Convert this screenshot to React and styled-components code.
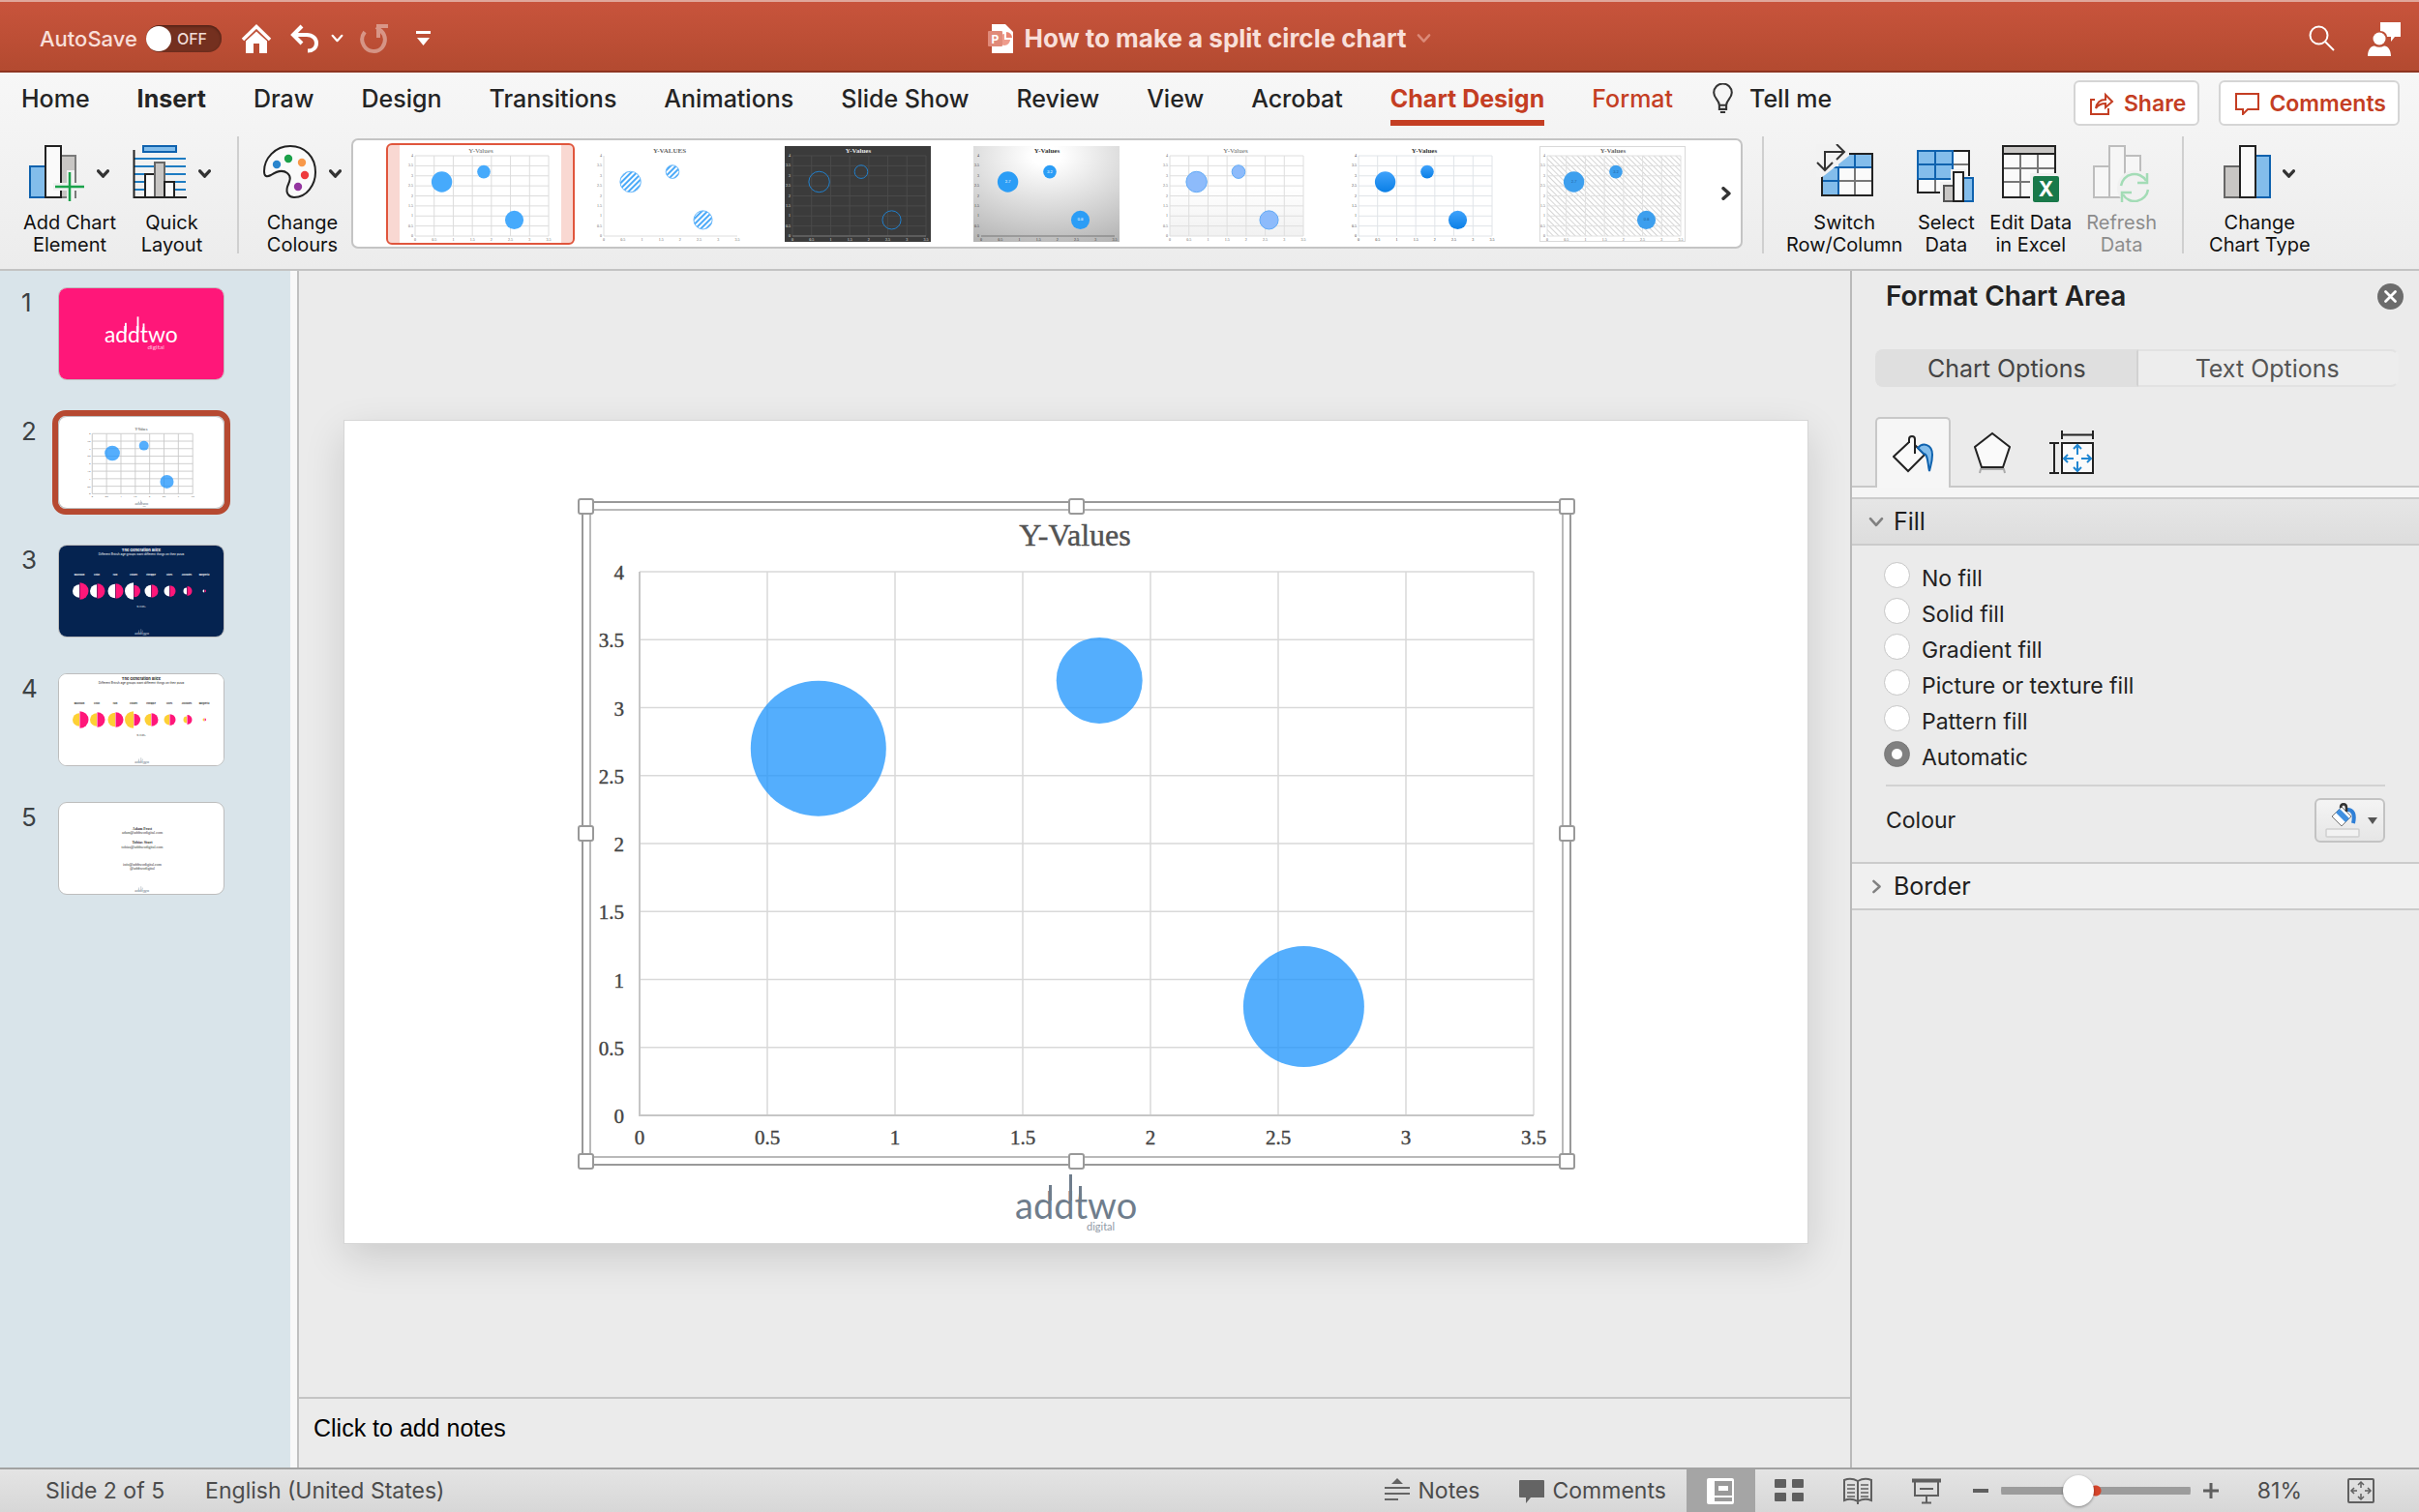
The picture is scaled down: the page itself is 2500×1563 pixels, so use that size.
import React, {useState} from 'react';
import styled, {createGlobalStyle, css} from 'styled-components';

const SANS = `Inter, "Liberation Sans", sans-serif`;
const SERIF = `"Liberation Serif", "Times New Roman", serif`;

const GlobalStyle = createGlobalStyle`
  *, *::before, *::after { box-sizing: border-box; }
  body { margin: 0; background: #ebebeb; font-family: ${SANS}; color: #222; }
  button, input, textarea { font: inherit; color: inherit; }
  button { padding: 0; border: 0; background: none; cursor: pointer; }
  svg { display: block; flex: none; }
`;

const AppWindow = styled.div`
  display: flex;
  flex-direction: column;
  height: 100vh;
`;

/* ---------- title bar ---------- */

const TitleBar = styled.header`
  display: grid;
  grid-template-columns: 1fr auto 1fr;
  align-items: center;
  height: 75px;
  padding: 4px 19px 0;
  border-top: 2px solid #e0a79b;
  border-bottom: 2px solid #8e3522;
  background: linear-gradient(#c8543c, #b34a30);
  color: #f8dfd9;
`;

const QuickAccess = styled.div`
  display: flex;
  align-items: center;
  margin-left: 22px;
`;

const AutoSave = styled.label`
  display: flex;
  align-items: center;
  gap: 9px;
  margin-right: 20px;
  font-size: 22px;
  font-weight: 500;
`;

const Toggle = styled.span`
  display: flex;
  align-items: center;
  gap: 6px;
  width: 78px;
  height: 28px;
  border-radius: 14px;
  background: #74301f;
  box-shadow: inset 0 1px 3px rgba(0, 0, 0, 0.4);
  color: #f0dcd7;
  font-size: 16px;
`;

const ToggleKnob = styled.input`
  appearance: none;
  width: 26px;
  height: 26px;
  margin: 0;
  border-radius: 50%;
  background: #fff;
`;

const IconButton = styled.button`
  display: flex;
  align-items: center;
  margin-right: ${props => props.$gap || 0}px;
  color: #fff;
  opacity: ${props => (props.disabled ? 0.4 : 1)};
`;

const DocumentTitle = styled.button`
  display: flex;
  align-items: center;
  gap: 10px;
  font-size: 26px;
  font-weight: 700;
`;

const TitleActions = styled.div`
  display: flex;
  align-items: center;
  justify-content: flex-end;
  gap: 34px;
`;

/* ---------- ribbon ---------- */

const Ribbon = styled.div`
  display: flex;
  flex-direction: column;
  height: 205px;
  border-bottom: 2px solid #c3c3c3;
  background: linear-gradient(#f7f7f7, #ececec);
`;

const TabRow = styled.div`
  display: flex;
  align-items: flex-start;
  gap: 40px;
  height: 66px;
  padding: 8px 20px 0 22px;
`;

const Tabs = styled.nav`
  display: flex;
  gap: 49px;
`;

const Tab = styled.button`
  display: flex;
  align-items: center;
  gap: 16px;
  height: 47px;
  padding: 0 0 4px;
  border-bottom: 6px solid transparent;
  font-size: 25px;
  font-weight: ${props => (props.$bold ? 700 : 500)};
  line-height: 34px;
  color: ${props => (props.$accent ? '#c43e23' : '#242424')};
  white-space: nowrap;
  ${props =>
    props.$active &&
    css`
      border-image: linear-gradient(#c43e23, #c43e23) 0 0 6 0;
    `}
`;

const TabActions = styled.div`
  display: flex;
  gap: 20px;
  margin-left: auto;
`;

const ActionButton = styled.button`
  display: flex;
  align-items: center;
  gap: 10px;
  height: 47px;
  padding: 0 12px 0 15px;
  border: 2px solid #d5d5d5;
  border-radius: 6px;
  background: #fff;
  color: #c43e23;
  font-size: 23px;
  font-weight: 600;
`;

const Tools = styled.div`
  display: flex;
  align-items: flex-start;
  padding: 0 16px;
`;

const ToolGroup = styled.div`
  display: flex;
  gap: ${props => props.$gap || 14}px;
  padding: 8px ${props => props.$right || 8}px 0 ${props => props.$left || 8}px;
`;

const Divider = styled.div`
  width: 2px;
  height: 121px;
  background: #cfcfcf;
`;

const Tool = styled.button`
  display: flex;
  flex-direction: column;
  align-items: center;
  gap: 10px;
  font-size: 20px;
  line-height: 23px;
  color: ${props => (props.disabled ? '#8c8c8c' : '#111')};
  white-space: pre-line;
`;

const ToolIcon = styled.span`
  display: flex;
  align-items: center;
  gap: ${props => props.$gap || 12}px;
  height: 60px;
`;

const Gallery = styled.div`
  display: flex;
  align-items: center;
  flex: 1;
  max-width: 1438px;
  height: 114px;
  margin: 2px 20px 0 2px;
  padding-left: 34px;
  border: 2px solid #c4c4c4;
  border-radius: 7px;
  background: #fff;
`;

const GalleryItem = styled.button`
  display: flex;
  justify-content: center;
  width: 195px;
  height: 105px;
  align-items: center;
  border: 2px solid transparent;
  border-radius: 6px;
  ${props =>
    props.$selected &&
    css`
      border-color: #e0563d;
      background: linear-gradient(90deg, #f9d8d2 12px, #fff 12px, #fff 179px, #f9d8d2 179px);
    `}
`;

const GalleryMore = styled.button`
  flex: 1;
  display: flex;
  justify-content: flex-end;
  padding-right: 10px;
`;

/* ---------- body ---------- */

const Body = styled.div`
  display: flex;
  flex: 1;
  min-height: 0;
`;

const SlideList = styled.ol`
  display: flex;
  flex-direction: column;
  gap: 25px;
  flex: none;
  width: 309px;
  margin: 0;
  padding: 11px 0 0 22px;
  list-style: none;
  border-right: 2px solid #c0c0c0;
  background: linear-gradient(90deg, #d9e4ea 300px, #f8f8f8 300px);
`;

const SlideItem = styled.li`
  display: flex;
  align-items: flex-start;
  gap: 16px;
  font-size: 26px;
  line-height: 44px;
  color: #3c4144;
`;

const SlideNumber = styled.span`
  width: 16px;
`;

const SlideThumb = styled.button`
  width: 184px;
  height: 108px;
  padding: ${props => (props.$selected ? 0 : 6)}px;
  border: ${props => (props.$selected ? '6px solid #b64931' : '0')};
  border-radius: 14px;

  svg {
    width: 100%;
    height: 100%;
    border: 1px solid #bdbdbd;
    border-radius: 9px;
    background: #fff;
  }
`;

const Editor = styled.main`
  display: flex;
  flex-direction: column;
  flex: 1;
  min-width: 0;
`;

const Stage = styled.div`
  display: flex;
  align-items: center;
  flex: 1;
  min-height: 0;
  padding: 0 44px 4px 47px;
`;

const Slide = styled.div`
  width: 100%;
  background: #fff;
  outline: 1px solid #d6d6d6;
  box-shadow: 0 14px 40px rgba(0, 0, 0, 0.14);
`;

const Notes = styled.textarea`
  height: 73px;
  padding: 14px 15px;
  border: 0;
  border-top: 2px solid #c4c4c4;
  background: #ebebeb;
  font-family: "Liberation Sans", Arial, sans-serif;
  font-size: 25px;
  line-height: 32px;
  resize: none;
  outline: 0;

  &::placeholder {
    color: #000;
    opacity: 1;
  }
`;

/* ---------- format pane ---------- */

const Pane = styled.aside`
  flex: none;
  width: 588px;
  border-left: 2px solid #b9b9b9;
`;

const PaneHeader = styled.div`
  display: flex;
  align-items: center;
  justify-content: space-between;
  padding: 8px 16px 0 35px;
`;

const PaneTitle = styled.h2`
  margin: 0;
  font-size: 28px;
  font-weight: 600;
  line-height: 36px;
`;

const Segments = styled.div`
  display: flex;
  height: 39px;
  margin: 37px 21px 31px 24px;
`;

const Segment = styled.button`
  flex: 1;
  border: 2px solid ${props => (props.$active ? '#dfdfdf' : '#e2e2e2')};
  border-right-color: ${props => (props.$active ? '#d2d2d2' : 'transparent')};
  border-left-width: ${props => (props.$active ? 2 : 0)}px;
  border-radius: ${props => (props.$active ? '8px 0 0 8px' : '0 8px 8px 0')};
  background: ${props => (props.$active ? '#dfdfdf' : '#ededed')};
  color: ${props => (props.$active ? '#444' : '#555')};
  font-size: 25px;
  line-height: 30px;
`;

const PaneTabs = styled.div`
  display: flex;
  height: 83px;
  padding-left: 24px;
  background: linear-gradient(#ebebeb 71px, #c8c8c8 71px, #c8c8c8 73px, #f5f5f5 73px);
`;

const PaneTab = styled.button`
  display: flex;
  align-items: center;
  justify-content: center;
  width: ${props => props.$width}px;
  height: 73px;
  ${props =>
    props.$active &&
    css`
      border: 2px solid #c8c8c8;
      border-bottom: 0;
      border-radius: 5px 5px 0 0;
      background: #f6f6f6;
    `}
`;

const SectionHeader = styled.button`
  display: flex;
  align-items: center;
  gap: 10px;
  width: 100%;
  height: 50px;
  padding-left: 17px;
  border-top: 2px solid #cbcbcb;
  border-bottom: 2px solid #cbcbcb;
  background: ${props => (props.$open ? 'linear-gradient(#e6e6e6, #dddddd)' : '#f0f0f0')};
  font-size: 25px;
  color: #1d1d1d;
`;

const ChevronSlot = styled.span`
  display: flex;
  justify-content: center;
  width: 16px;
`;

const FillBody = styled.div`
  padding: 15px 35px 20px;
`;

const RadioRow = styled.label`
  display: flex;
  align-items: center;
  gap: 12px;
  height: 37px;
  font-size: 23px;
  color: #222;
`;

const Radio = styled.input`
  appearance: none;
  width: 27px;
  height: 27px;
  margin: 0 0 6px -2px;
  border: 1px solid #c6c6c6;
  border-radius: 50%;
  background: #fff;

  &:checked {
    border-color: #777;
    background: radial-gradient(circle, #fff 5px, #808080 6px);
  }
`;

const ColourRow = styled.div`
  display: flex;
  align-items: center;
  justify-content: space-between;
  margin-top: 10px;
  padding-top: 12px;
  border-top: 2px solid #d2d2d2;
  font-size: 23px;
  line-height: 30px;
`;

const ColourButton = styled.button`
  display: flex;
  align-items: center;
  gap: 8px;
  height: 46px;
  padding: 0 6px 0 9px;
  border: 2px solid #c3c3c3;
  border-radius: 6px;
  background: linear-gradient(#f4f4f4, #e6e6e6);
`;

/* ---------- status bar ---------- */

const StatusBar = styled.footer`
  display: flex;
  align-items: center;
  justify-content: space-between;
  flex: none;
  height: 46px;
  padding: 0 46px 0 47px;
  border-top: 2px solid #a2a2a2;
  background: linear-gradient(#e4e4e4, #d7d7d7);
  color: #4c4c4c;
  font-size: 23px;
`;

const StatusGroup = styled.div`
  display: flex;
  align-items: center;
  gap: ${props => props.$gap}px;
  height: 100%;
`;

const StatusButton = styled.button`
  display: flex;
  align-items: center;
  gap: 9px;
`;

const ViewButtons = styled.div`
  display: flex;
  height: 100%;
  margin-left: 21px;
`;

const ViewButton = styled.button`
  display: flex;
  align-items: center;
  justify-content: center;
  width: 71px;
  height: 100%;
  background: ${props => (props.$active ? '#a5a5a5' : 'none')};
`;

const ZoomControls = styled.div`
  display: flex;
  align-items: center;
  gap: 12px;
  margin: 0 39px 0 11px;
`;

const ZoomSlider = styled.input`
  appearance: none;
  width: 196px;
  height: 34px;
  margin: 0;
  background:
    radial-gradient(circle at 98px 17px, #d5452b 5px, transparent 6px),
    linear-gradient(transparent 13px, #9c9c9c 13px, #9c9c9c 21px, transparent 21px);
  border-radius: 17px;

  &::-webkit-slider-thumb {
    appearance: none;
    width: 32px;
    height: 32px;
    border-radius: 50%;
    background: #fff;
    box-shadow: 0 1px 3px rgba(0, 0, 0, 0.4);
  }
`;

/* ---------- icons ---------- */

const Chevron = ({dir = 'down', size = 12, color = '#333', weight = 3}) => (
  <svg
    width={dir === 'down' ? size : Math.round(size * 0.7)}
    height={dir === 'down' ? Math.round(size * 0.7) : size}
    viewBox={dir === 'down' ? '0 0 12 8' : '0 0 8 12'}
    fill="none"
    stroke={color}
    strokeWidth={weight}
    strokeLinecap="round"
    strokeLinejoin="round"
  >
    <path d={dir === 'down' ? 'M1.5 1.5 6 6.5 10.5 1.5' : 'M1.5 1.5 6.5 6 1.5 10.5'} />
  </svg>
);

const HomeIcon = () => (
  <svg width="32" height="30" viewBox="0 0 32 30">
    <path d="M2 16 16 2.500 30 16" fill="none" stroke="#fff" strokeWidth="3.500" />
    <path d="M5 17.500 16 7.500 27 17.500V30H19V20H13V30H5Z" fill="#fff" />
  </svg>
);

const UndoIcon = () => (
  <svg width="30" height="30" viewBox="0 0 30 30" fill="none" stroke="#fff" strokeWidth="4">
    <path d="M12 2 3 11 12 20" />
    <path d="M3 11H17C23 11 27 15 27 19.500C27 24 23.500 27.500 18 27.500" />
  </svg>
);

const RedoIcon = () => (
  <svg width="30" height="32" viewBox="0 0 30 32" fill="none" stroke="#fff" strokeWidth="4">
    <path d="M5 9C2 13 1 18 4 23C8 30 18 31 23 25C27 20 27 13 22 8L17 4" />
    <path d="M29 3H19V15" />
  </svg>
);

const CustomizeIcon = () => (
  <svg width="15" height="16" viewBox="0 0 15 16" fill="#fff">
    <path d="M0 0H15V3H0ZM1 7H14L7.500 15Z" />
  </svg>
);

const FileIcon = () => (
  <svg width="27" height="30" viewBox="0 0 27 30">
    <path d="M4 0H18L26 8V30H4Z" fill="#fff" />
    <path d="M17 10A6 6 0 1 0 23 16H17Z" fill="#ee9c8c" />
    <path d="M19 8A6 6 0 0 1 25 14H19Z" fill="#e98572" />
    <rect y="7" width="15" height="16" rx="1" fill="#e08a79" />
    <text x="7.500" y="19.500" textAnchor="middle" fontSize="12" fontWeight="700" fill="#fff">P</text>
  </svg>
);

const SearchIcon = () => (
  <svg width="27" height="27" viewBox="0 0 27 27" fill="none" stroke="#fff" strokeWidth="2">
    <circle cx="10.500" cy="10.500" r="9" />
    <path d="M17 17 26 26" />
  </svg>
);

const PersonIcon = () => (
  <svg width="34" height="36" viewBox="0 0 34 36" fill="#fff">
    <path d="M13 1H34V16H28L24 21V16H20C20 13 17 10 13 10Z" />
    <circle cx="12" cy="18" r="6.500" />
    <path d="M0 36C0 29 4 25 7 25.500Q12 28 17 25.500C20 25 24 29 24 36Z" />
  </svg>
);

const BulbIcon = () => (
  <svg width="23" height="31" viewBox="0 0 21 30" fill="none" stroke="#333" strokeWidth="2">
    <path d="M7 22C7 17 1.500 15 1.500 9.500A9 9 0 0 1 19.500 9.500C19.500 15 14 17 14 22ZM7 22V26H14V22M8 29H13" />
  </svg>
);

const ShareIcon = () => (
  <svg width="25" height="24" viewBox="0 0 25 24" fill="none" stroke="#c43e23" strokeWidth="2">
    <path d="M5 8H1V23H19V17" />
    <path d="M6 17C7 11 10 8 16 8V3L23 10 16 16V12C11 12 8 14 6 17Z" />
  </svg>
);

const CommentIcon = () => (
  <svg width="25" height="24" viewBox="0 0 25 24" fill="none" stroke="#c43e23" strokeWidth="2">
    <path d="M1 2H24V18H13L8 23V18H1Z" />
  </svg>
);

const BLUE = '#83bdeb';
const NAVY = '#0f62ae';

const AddElementIcon = () => (
  <svg width="58" height="60" viewBox="0 0 58 60" strokeWidth="2">
    <rect x="33" y="12" width="15" height="43" fill="#c8c6c4" stroke="#7a7a7a" />
    <rect x="1" y="23" width="16" height="32" fill={BLUE} stroke={NAVY} />
    <rect x="17" y="2" width="16" height="53" fill="#fafafa" stroke="#222" />
    <path d="M25 44H60M43 27V62" stroke="#f1f1f1" strokeWidth="8" />
    <path d="M27 44H57M42 29V59" stroke="#1aa24b" strokeWidth="2.500" />
  </svg>
);

const QuickLayoutIcon = () => (
  <svg width="56" height="60" viewBox="0 0 56 60" strokeWidth="2">
    <rect x="11" y="2" width="34" height="6" fill={BLUE} stroke={NAVY} />
    <path d="M2 15H55M2 23H55M2 31H55M2 39H55M2 47H55" stroke="#1e7cc2" />
    <rect x="13" y="31" width="10" height="24" fill="#fafafa" stroke="#222" />
    <rect x="23" y="19" width="10" height="36" fill="#c8c6c4" stroke="#666" />
    <rect x="33" y="39" width="10" height="16" fill="#fafafa" stroke="#222" />
    <path d="M1.500 6V55H56" fill="none" stroke="#222" />
  </svg>
);

const PaletteIcon = () => (
  <svg width="56" height="60" viewBox="0 0 56 60">
    <path
      d="M28 2C12 2 1 15 1 28C1 34 4 34 8 32C14 28 20 26 25 30C30 34 27 39 25 44C23 51 27 55 32 55C45 55 54 42 54 29C54 13 43 2 28 2Z"
      fill="#fafafa"
      stroke="#222"
      strokeWidth="2"
    />
    <circle cx="14" cy="21" r="4.200" fill="#2a85cd" />
    <circle cx="26" cy="15" r="4.200" fill="#1ba049" />
    <circle cx="40" cy="19" r="4.200" fill="#f8994a" />
    <circle cx="43" cy="32" r="4.200" fill="#ee3b3d" />
    <circle cx="36" cy="44" r="4.200" fill="#9435a0" />
  </svg>
);

const SwitchIcon = () => (
  <svg width="59" height="60" viewBox="0 0 59 60" fill="none" strokeWidth="2">
    <rect x="6" y="10" width="52" height="43" fill="#fafafa" />
    <path d="M23 10H58V24H23ZM6 24H23V53H6Z" fill={BLUE} />
    <path d="M23 38H58M40 24V53" stroke="#777" />
    <path d="M6 38H23M23 24V53M6 24H58M40 10V24" stroke={NAVY} />
    <rect x="6" y="10" width="52" height="43" stroke="#222" />
    <path d="M0 0H34L34 12 9 32 6 34H0Z" fill="#f2f2f2" />
    <path d="M9 26V8H29M21 0 29 8 21 16M1 19 9 27 17 19" stroke="#333" />
  </svg>
);

const SelectDataIcon = () => (
  <svg width="60" height="60" viewBox="0 0 60 60" fill="none" strokeWidth="2">
    <rect x="1" y="7" width="53" height="43" fill="#fafafa" />
    <path d="M1 7H37V36H1Z" fill={BLUE} />
    <path d="M37 21H54M19 36V50M37 36V50M37 36H54" stroke="#777" />
    <rect x="1" y="7" width="53" height="43" stroke="#222" />
    <path d="M1 7H37V36H1ZM19 7V36M1 21H37" stroke={NAVY} />
    <path d="M24 60V39H35V26H51V33H60V60Z" fill="#f1f1f1" />
    <rect x="28" y="43" width="10" height="16" fill="#c8c6c4" stroke="#555" />
    <rect x="48" y="35" width="10" height="24" fill={BLUE} stroke={NAVY} />
    <rect x="38" y="29" width="10" height="30" fill="#fafafa" stroke="#222" />
  </svg>
);

const ExcelIcon = () => (
  <svg width="60" height="60" viewBox="0 0 60 60" fill="none" strokeWidth="2">
    <rect x="1" y="2" width="54" height="53" fill="#fafafa" />
    <path d="M1 2H55V10H1Z" fill="#c8c6c4" />
    <path d="M1 25H55M1 39H55M19 10V55M37 10V55" stroke="#777" />
    <path d="M1 2H55V55H1ZM1 10H55" stroke="#222" />
    <rect x="29" y="30" width="31" height="30" fill="#f1f1f1" />
    <rect x="32" y="33" width="27" height="27" rx="2" fill="#19794a" />
    <text x="45.500" y="54" textAnchor="middle" fontSize="21" fontWeight="700" fill="#fff">X</text>
  </svg>
);

const RefreshIcon = () => (
  <svg width="59" height="60" viewBox="0 0 59 60" fill="none" strokeWidth="2" stroke="#bdbdbd">
    <rect x="33" y="12" width="16" height="43" fill="#f6f6f6" />
    <rect x="1" y="23" width="16" height="32" fill="#f6f6f6" />
    <rect x="17" y="2" width="16" height="53" fill="#f6f6f6" />
    <circle cx="43" cy="45" r="18" fill="#f1f1f1" stroke="none" />
    <g stroke="#a3dcb6" strokeWidth="2.500">
      <path d="M29 43A14 14 0 0 1 55 38M57 47A14 14 0 0 1 31 52" />
      <path d="M56 30V40H46M30 60V50H40" />
    </g>
  </svg>
);

const ChartTypeIcon = () => (
  <svg width="49" height="60" viewBox="0 0 49 60" strokeWidth="2">
    <rect x="1" y="23" width="16" height="32" fill="#c8c6c4" stroke="#666" />
    <rect x="33" y="12" width="15" height="43" fill={BLUE} stroke={NAVY} />
    <rect x="17" y="2" width="16" height="53" fill="#fafafa" stroke="#222" />
  </svg>
);

const CloseIcon = () => (
  <svg width="27" height="27" viewBox="0 0 27 27">
    <circle cx="13.500" cy="13.500" r="13.500" fill="#6c6c6c" />
    <path d="M8.500 8.500 18.500 18.500M18.500 8.500 8.500 18.500" stroke="#fff" strokeWidth="2.800" strokeLinecap="round" />
  </svg>
);

const BucketIcon = () => (
  <svg width="42" height="40" viewBox="0 0 42 40" fill="none" strokeWidth="2">
    <path d="M17 8 1 23 16 38 33 21 23 11" fill="#fafafa" stroke="#222" />
    <path d="M26 14C31 8 41 10 41 21C41 29 39 33 38 38C36 31 37 20 32 20Z" fill={BLUE} stroke={NAVY} />
    <path d="M17 9V5C17 1 23 1 23 5V20" fill="#fafafa" stroke="#222" />
  </svg>
);

const PentagonIcon = () => (
  <svg width="38" height="44" viewBox="0 0 38 44" fill="none" strokeWidth="2">
    <path d="M6 43 7 39H31L32 43" stroke="#aaa" />
    <path d="M19 2 37 16 30 37H8L1 16Z" fill="#fafafa" stroke="#222" />
  </svg>
);

const SizeIcon = () => (
  <svg width="46" height="46" viewBox="0 0 46 46" fill="none" strokeWidth="2" stroke="#222">
    <path d="M13 0V9M45 0V9M13 4.500H45M0 13H10M0 44H10M5 13V44" />
    <rect x="13" y="13" width="32" height="31" fill="#fafafa" />
    <g stroke="#1f86d2">
      <path d="M29 16V25M29 32V42M16 29H25M33 29H42" />
      <path d="M25 19 29 15 33 19M25 38 29 42 33 38M19 25 15 29 19 33M39 25 43 29 39 33" />
    </g>
  </svg>
);

const ColourIcon = () => (
  <svg width="36" height="38" viewBox="0 0 36 38" fill="none">
    <path d="M7 15 17 5 27 15 17 25Z" fill="#fff" stroke="#777" />
    <path d="M11 11 21 21 25 17 15 7Z" fill="#3f8fe0" />
    <path d="M23 8C29 8 31 13 29 22" stroke="#2f7fd6" strokeWidth="4" />
    <path d="M16 6C16 1 22 1 22 6V10" stroke="#333" strokeWidth="2.500" />
    <rect x="1" y="28" width="34" height="8" rx="1" fill="#f2f2f2" stroke="#cfcfcf" strokeWidth="1.500" />
  </svg>
);

const NotesIcon = () => (
  <svg width="26" height="26" viewBox="0 0 26 26" fill="#646464">
    <path d="M7 6 13 0 19 6ZM0 9H26V11H0ZM0 15H26V17H0ZM0 21H14V23H0Z" />
  </svg>
);

const StatusCommentIcon = () => (
  <svg width="26" height="25" viewBox="0 0 26 25" fill="#646464">
    <path d="M1 1H25Q26 1 26 2V19H12L7 25V19H1Q0 19 0 18V2Q0 1 1 1Z" />
  </svg>
);

const NormalViewIcon = () => (
  <svg width="28" height="27" viewBox="0 0 28 27">
    <rect width="28" height="27" rx="2" fill="#fff" />
    <path d="M8 3H26V18H8ZM8 20H26V24H8Z" fill="#9a9a9a" />
    <rect x="12" y="8" width="10" height="5" fill="#fff" />
  </svg>
);

const SorterIcon = () => (
  <svg width="30" height="24" viewBox="0 0 30 24" fill="#5f5f5f">
    <rect width="12" height="9" rx="1" />
    <rect x="18" width="12" height="9" rx="1" />
    <rect y="14" width="12" height="9" rx="1" />
    <rect x="18" y="14" width="12" height="9" rx="1" />
  </svg>
);

const BookIcon = () => (
  <svg width="30" height="28" viewBox="0 0 30 28" fill="none" stroke="#5f5f5f" strokeWidth="2">
    <path d="M15 4Q8 0 1 3V24Q8 21 15 25Q22 21 29 24V3Q22 0 15 4V28" />
    <path d="M4 8H12M4 12H12M4 16H12M4 20H12M18 8H26M18 12H26M18 16H26M18 20H26" strokeWidth="1.500" />
  </svg>
);

const PresentIcon = () => (
  <svg width="30" height="27" viewBox="0 0 30 27" fill="none" stroke="#5f5f5f" strokeWidth="2">
    <path d="M0 2.500H30" strokeWidth="4" />
    <path d="M3 4V18H27V4M8 11H22M15 18V25M10 25.500H20" />
  </svg>
);

const FitIcon = () => (
  <svg width="28" height="28" viewBox="0 0 28 28" fill="none" stroke="#5f5f5f" strokeWidth="2">
    <rect x="1" y="2" width="26" height="24" rx="1" />
    <path d="M14 5V11M14 17V23M4 14H10M18 14H24" strokeWidth="1.500" />
    <path d="M11 8 14 5 17 8M11 20 14 23 17 20M7 11 4 14 7 17M21 11 24 14 21 17" strokeWidth="1.500" />
  </svg>
);

/* ---------- chart drawings ---------- */

const X_TICKS = [0, 0.5, 1, 1.5, 2, 2.5, 3, 3.5];
const Y_TICKS = [0, 0.5, 1, 1.5, 2, 2.5, 3, 3.5, 4];
const BUBBLES = [
  {x: 0.7, y: 2.7, r: 70},
  {x: 1.8, y: 3.2, r: 44.5},
  {x: 2.6, y: 0.8, r: 62.5}
];

// Wordmark with its raised stems, about 123 x 61
const Wordmark = ({color, digital = color}) => (
  <g fill={color} stroke="none" fontFamily="Lato, sans-serif">
    <text x="0" y="46" fontSize="38">addtwo</text>
    <rect x="35" y="11" width="3" height="16" />
    <rect x="56" y="0" width="3" height="27" />
    <rect x="66" y="12" width="3" height="16" />
    <text x="74" y="58" fontSize="11" fill={digital}>digital</text>
  </g>
);

// Gallery preview, 151 x 99
const StylePreview = ({look, id}) => {
  const x = v => 8 + (v / 3.5) * 138;
  const y = v => 93 - (v / 4) * 83;
  const ink = look.ink || '#666';
  return (
    <svg width="151" height="99" viewBox="0 0 151 99">
      <defs>
        <pattern id={`${id}-hatch`} width="4" height="4" patternUnits="userSpaceOnUse" patternTransform="rotate(45)">
          <rect width="4" height="4" fill="#fff" />
          <rect width="2" height="4" fill="#4aa9f8" />
        </pattern>
        <pattern id={`${id}-lines`} width="4" height="4" patternUnits="userSpaceOnUse" patternTransform="rotate(-45)">
          <rect width="1" height="4" fill="#d4d4d4" />
        </pattern>
        <radialGradient id={`${id}-grey`} cx="0.5" cy="0.1" r="1">
          <stop offset="0.1" stopColor="#fff" />
          <stop offset="1" stopColor="#b4b4b4" />
        </radialGradient>
        <linearGradient id={`${id}-fade`} x2="0" y2="1">
          <stop offset="0.4" stopColor="#fff" />
          <stop offset="1" stopColor="#f1f1f1" />
        </linearGradient>
        <linearGradient id={`${id}-blue`} x2="0" y2="1">
          <stop offset="0" stopColor="#3fa2fb" />
          <stop offset="1" stopColor="#0a7fe6" />
        </linearGradient>
      </defs>
      <rect width="151" height="99" fill={look.back === 'grey' ? `url(#${id}-grey)` : look.back || '#fff'} />
      {look.frame && <rect x="0.5" y="0.5" width="150" height="98" fill="none" stroke="#d9d9d9" />}
      {look.plot && <rect x="8" y="10" width="138" height="83" fill={`url(#${id}-${look.plot})`} />}
      {look.grid && (
        <path
          d={
            X_TICKS.map(v => `M${x(v)} 10V93`).join('') +
            Y_TICKS.map(v => `M8 ${y(v)}H146`).join('')
          }
          stroke={look.grid}
          strokeWidth="1"
        />
      )}
      {look.axis && <path d={look.axis} stroke={look.axisColor || '#ddd'} fill="none" />}
      {BUBBLES.map(b => (
        <circle
          key={b.x}
          cx={x(b.x)}
          cy={y(b.y)}
          r={b.r * 0.153}
          fill={look.fill === 'hatch' || look.fill === 'blue' ? `url(#${id}-${look.fill})` : look.fill}
          stroke={look.stroke || 'none'}
        />
      ))}
      {look.labels &&
        BUBBLES.map(b => (
          <text key={b.x} x={x(b.x)} y={y(b.y) + 1} textAnchor="middle" fontSize="4" fill={look.labels}>{b.y}</text>
        ))}
      <g fontFamily={SERIF} fill={ink}>
        <text x="76" y="6.500" textAnchor="middle" fontSize="7" fontWeight={look.bold ? 700 : 400}>
          {look.title || 'Y-Values'}
        </text>
        {X_TICKS.map(v => (
          <text key={v} x={x(v)} y="98" textAnchor="middle" fontSize="4">{v}</text>
        ))}
        {Y_TICKS.map(v => (
          <text key={v} x="6" y={y(v) + 1} textAnchor="end" fontSize="4">{v}</text>
        ))}
      </g>
    </svg>
  );
};

const LOOKS = [
  {grid: '#dcdcdc', fill: '#46aafc'},
  {axis: 'M8 10V93H146', fill: 'hatch', stroke: '#6fbafa', title: 'Y-VALUES', bold: true},
  {back: '#3b3b3b', grid: '#4a4a4a', fill: 'none', stroke: '#2180cc', ink: '#e5e5e5', bold: true, axis: 'M8 93H146', axisColor: '#777'},
  {back: 'grey', fill: '#2b9df6', ink: '#333', bold: true, labels: '#fff', axis: 'M8 93H146', axisColor: '#777'},
  {plot: 'fade', grid: '#dedede', fill: '#8dbbfb', stroke: '#62abf7'},
  {grid: '#e0e4e8', fill: 'blue', ink: '#333', bold: true},
  {frame: true, plot: 'lines', grid: '#e0e0e0', fill: '#3d9fee', labels: '#1d5f9c', bold: true}
];

const HANDLES = [
  [249, 88], [756, 88], [1263, 88],
  [249, 426], [1263, 426],
  [249, 765], [756, 765], [1263, 765]
];

const BubbleChart = ({selected, gridColor = '#d9d9d9', gridWidth = 1.5}) => {
  const x = v => 305 + v * 264;
  const y = v => 718 - v * 140.5;
  return (
    <g>
      <g stroke={gridColor} strokeWidth={gridWidth}>
        {X_TICKS.map(v => <path key={v} d={`M${x(v)} ${y(4)}V${y(0)}`} />)}
        {Y_TICKS.map(v => <path key={v} d={`M${x(0)} ${y(v)}H${x(3.5)}`} />)}
      </g>
      <path d={`M${x(0)} ${y(4)}V${y(0)}H${x(3.5)}`} fill="none" stroke="#c6c6c6" strokeWidth="2" />
      {BUBBLES.map(b => (
        <circle key={b.x} cx={x(b.x)} cy={y(b.y)} r={b.r} fill="#1b93fc" fillOpacity="0.75" />
      ))}
      <g fontFamily={SERIF} fontSize="21" fill="#444" stroke="#444" strokeWidth="0.400">
        <text x="755" y="129" textAnchor="middle" fontSize="32" fill="#555">Y-Values</text>
        {X_TICKS.map(v => <text key={v} x={x(v)} y="748" textAnchor="middle">{v}</text>)}
        {Y_TICKS.map(v => <text key={v} x="289" y={y(v) + 8} textAnchor="end">{v}</text>)}
      </g>
      {selected && (
        <g fill="none" stroke="#999" strokeWidth="2">
          <rect x="246" y="84" width="1021" height="685" />
          <rect x="254" y="92" width="1005" height="669" stroke="#b9b9b9" />
          {HANDLES.map(([hx, hy]) => (
            <rect key={`${hx}-${hy}`} x={hx - 7} y={hy - 7} width="15" height="15" rx="2" fill="#fff" />
          ))}
        </g>
      )}
    </g>
  );
};

const TitleSlide = () => (
  <svg viewBox="0 0 170 96" preserveAspectRatio="none">
    <rect width="170" height="96" fill="#ff1779" />
    <g transform="translate(47 30) scale(0.6)">
      <Wordmark color="#fff" digital="#ffc0dc" />
    </g>
  </svg>
);

const ChartSlide = () => (
  <svg viewBox="0 0 1512 850" preserveAspectRatio="none">
    <BubbleChart gridColor="#c9c9c9" gridWidth={8} />
    <g transform="translate(695 779)">
      <Wordmark color="#6f7d8c" />
    </g>
  </svg>
);

const TOPPINGS = [
  {name: 'Mushroom', x: 21, left: 7, right: 9},
  {name: 'Onion', x: 39, left: 7, right: 8},
  {name: 'Ham', x: 58, left: 7.5, right: 8},
  {name: 'Chicken', x: 77, left: 9, right: 6.5},
  {name: 'Pineapple', x: 95, left: 6.5, right: 7},
  {name: 'Olives', x: 114, left: 5.5, right: 6},
  {name: 'Anchovies', x: 132, left: 3.5, right: 5},
  {name: 'Margherita', x: 150, left: 1.5, right: 1.5}
];

const SplitSlide = ({back, ink, left, logo}) => (
  <svg viewBox="0 0 170 96" preserveAspectRatio="none">
    <rect width="170" height="96" fill={back} />
    <g fill={ink} textAnchor="middle" fontFamily={SANS}>
      <text x="85" y="6" fontSize="4" fontWeight="700">The Generation Slice</text>
      <text x="85" y="10" fontSize="3">Different British age groups want different things on their pizza</text>
      {TOPPINGS.map(t => (
        <text key={t.name} x={t.x} y="32" fontSize="2" fontWeight="700">{t.name}</text>
      ))}
      <text x="85" y="65" fontSize="2">18-24   65+</text>
    </g>
    {TOPPINGS.map(t => (
      <g key={t.name}>
        <path d={`M${t.x} ${48 - t.left}A${t.left} ${t.left} 0 0 0 ${t.x} ${48 + t.left}Z`} fill={left} />
        <path d={`M${t.x + 0.5} ${48 - t.right}A${t.right} ${t.right} 0 0 1 ${t.x + 0.5} ${48 + t.right}Z`} fill="#ff1779" />
      </g>
    ))}
    <g transform="translate(78 88) scale(0.120)">
      <Wordmark color={logo} />
    </g>
  </svg>
);

const ContactSlide = () => (
  <svg viewBox="0 0 170 96" preserveAspectRatio="none">
    <g textAnchor="middle" fontFamily={SERIF} fill="#333" fontSize="4">
      <text x="86" y="29" fontWeight="700">Adam Frost</text>
      <text x="86" y="33">adam@addtwodigital.com</text>
      <text x="86" y="43" fontWeight="700">Tobias Sturt</text>
      <text x="86" y="48">tobias@addtwodigital.com</text>
      <text x="86" y="66">info@addtwodigital.com</text>
      <text x="86" y="70">@addtwodigital</text>
    </g>
    <g transform="translate(78 88) scale(0.120)">
      <Wordmark color="#6f7d8c" />
    </g>
  </svg>
);

const SLIDES = [
  <TitleSlide />,
  <ChartSlide />,
  <SplitSlide back="#052350" ink="#fff" left="#fff" logo="#c8d0dc" />,
  <SplitSlide back="#fff" ink="#222" left="#fdd035" logo="#6f7d8c" />,
  <ContactSlide />
];

const TABS = [
  {label: 'Home'},
  {label: 'Insert', $bold: true},
  {label: 'Draw'},
  {label: 'Design'},
  {label: 'Transitions'},
  {label: 'Animations'},
  {label: 'Slide Show'},
  {label: 'Review'},
  {label: 'View'},
  {label: 'Acrobat'},
  {label: 'Chart Design', $bold: true, $accent: true, $active: true},
  {label: 'Format', $accent: true}
];

const FILLS = ['No fill', 'Solid fill', 'Gradient fill', 'Picture or texture fill', 'Pattern fill', 'Automatic'];

const RibbonTool = ({icon, label, menu, disabled}) => (
  <Tool type="button" disabled={disabled}>
    <ToolIcon>
      {icon}
      {menu && <Chevron size={13} />}
    </ToolIcon>
    {label}
  </Tool>
);

export default function App() {
  const [slide, setSlide] = useState(1);
  const [look, setLook] = useState(0);
  const [fill, setFill] = useState('Automatic');
  const [zoom, setZoom] = useState(39);

  return (
    <AppWindow>
      <GlobalStyle />
      <TitleBar>
        <QuickAccess>
          <AutoSave>
            AutoSave
            <Toggle>
              <ToggleKnob type="checkbox" role="switch" aria-label="AutoSave" />
              OFF
            </Toggle>
          </AutoSave>
          <IconButton aria-label="Home" $gap={19}><HomeIcon /></IconButton>
          <IconButton aria-label="Undo" $gap={12}><UndoIcon /></IconButton>
          <IconButton aria-label="Undo history" $gap={17}><Chevron size={13} color="#fff" weight={2} /></IconButton>
          <IconButton aria-label="Redo" disabled $gap={28}><RedoIcon /></IconButton>
          <IconButton aria-label="Customise toolbar"><CustomizeIcon /></IconButton>
        </QuickAccess>
        <DocumentTitle>
          <FileIcon />
          How to make a split circle chart
          <Chevron size={15} color="#db8a78" weight={2} />
        </DocumentTitle>
        <TitleActions>
          <IconButton aria-label="Search"><SearchIcon /></IconButton>
          <IconButton aria-label="Account"><PersonIcon /></IconButton>
        </TitleActions>
      </TitleBar>

      <Ribbon>
        <TabRow>
          <Tabs>
            {TABS.map(({label, ...rest}) => <Tab key={label} {...rest}>{label}</Tab>)}
          </Tabs>
          <Tab><BulbIcon />Tell me</Tab>
          <TabActions>
            <ActionButton><ShareIcon />Share</ActionButton>
            <ActionButton><CommentIcon />Comments</ActionButton>
          </TabActions>
        </TabRow>
        <Tools>
          <ToolGroup $gap={17} $right={27}>
            <RibbonTool icon={<AddElementIcon />} label={'Add Chart\nElement'} menu />
            <RibbonTool icon={<QuickLayoutIcon />} label={'Quick\nLayout'} menu />
          </ToolGroup>
          <Divider />
          <ToolGroup $left={25}>
            <RibbonTool icon={<PaletteIcon />} label={'Change\nColours'} menu />
          </ToolGroup>
          <Gallery>
            {LOOKS.map((l, i) => (
              <GalleryItem key={i} $selected={i === look} onClick={() => setLook(i)} aria-label={`Style ${i + 1}`}>
                <StylePreview look={l} id={`style${i}`} />
              </GalleryItem>
            ))}
            <GalleryMore aria-label="More styles"><Chevron dir="right" size={14} /></GalleryMore>
          </Gallery>
          <Divider />
          <ToolGroup $gap={15} $left={23} $right={26}>
            <RibbonTool icon={<SwitchIcon />} label={'Switch\nRow/Column'} />
            <RibbonTool icon={<SelectDataIcon />} label={'Select\nData'} />
            <RibbonTool icon={<ExcelIcon />} label={'Edit Data\nin Excel'} />
            <RibbonTool icon={<RefreshIcon />} label={'Refresh\nData'} disabled />
          </ToolGroup>
          <Divider />
          <ToolGroup $left={26} $right={26}>
            <RibbonTool icon={<ChartTypeIcon />} label={'Change\nChart Type'} menu />
          </ToolGroup>
        </Tools>
      </Ribbon>

      <Body>
        <SlideList>
          {SLIDES.map((preview, i) => (
            <SlideItem key={i}>
              <SlideNumber>{i + 1}</SlideNumber>
              <SlideThumb $selected={i === slide} onClick={() => setSlide(i)} aria-label={`Slide ${i + 1}`}>
                {preview}
              </SlideThumb>
            </SlideItem>
          ))}
        </SlideList>

        <Editor>
          <Stage>
            <Slide>
              <svg width="100%" viewBox="0 0 1512 850">
                <BubbleChart selected />
                <g transform="translate(693 779)">
                  <Wordmark color="#6f7d8c" digital="#8f99a5" />
                </g>
              </svg>
            </Slide>
          </Stage>
          <Notes aria-label="Notes" placeholder="Click to add notes" />
        </Editor>

        <Pane>
          <PaneHeader>
            <PaneTitle>Format Chart Area</PaneTitle>
            <IconButton aria-label="Close pane"><CloseIcon /></IconButton>
          </PaneHeader>
          <Segments>
            <Segment $active>Chart Options</Segment>
            <Segment>Text Options</Segment>
          </Segments>
          <PaneTabs>
            <PaneTab $active $width={78} aria-label="Fill and line"><BucketIcon /></PaneTab>
            <PaneTab $width={86} aria-label="Effects"><PentagonIcon /></PaneTab>
            <PaneTab $width={78} aria-label="Size and properties"><SizeIcon /></PaneTab>
          </PaneTabs>
          <SectionHeader $open>
            <ChevronSlot><Chevron size={16} color="#808080" weight={2} /></ChevronSlot>
            Fill
          </SectionHeader>
          <FillBody>
            {FILLS.map(name => (
              <RadioRow key={name}>
                <Radio type="radio" name="fill" checked={fill === name} onChange={() => setFill(name)} />
                {name}
              </RadioRow>
            ))}
            <ColourRow>
              Colour
              <ColourButton aria-label="Fill colour">
                <ColourIcon />
                <svg width="10" height="7" viewBox="0 0 10 7"><path d="M0 0H10L5 7Z" fill="#555" /></svg>
              </ColourButton>
            </ColourRow>
          </FillBody>
          <SectionHeader>
            <ChevronSlot><Chevron dir="right" size={15} color="#808080" weight={2} /></ChevronSlot>
            Border
          </SectionHeader>
        </Pane>
      </Body>

      <StatusBar>
        <StatusGroup $gap={42}>
          <span>Slide 2 of 5</span>
          <span>English (United States)</span>
        </StatusGroup>
        <StatusGroup>
          <StatusGroup $gap={40}>
            <StatusButton><NotesIcon />Notes</StatusButton>
            <StatusButton><StatusCommentIcon />Comments</StatusButton>
          </StatusGroup>
          <ViewButtons>
            <ViewButton $active aria-label="Normal view"><NormalViewIcon /></ViewButton>
            <ViewButton aria-label="Slide sorter"><SorterIcon /></ViewButton>
            <ViewButton aria-label="Reading view"><BookIcon /></ViewButton>
            <ViewButton aria-label="Slide show"><PresentIcon /></ViewButton>
          </ViewButtons>
          <ZoomControls>
            <button aria-label="Zoom out">
              <svg width="18" height="18" viewBox="0 0 18 18"><path d="M1 9H17" stroke="#5f5f5f" strokeWidth="4" /></svg>
            </button>
            <ZoomSlider
              type="range"
              aria-label="Zoom"
              value={zoom}
              onChange={e => setZoom(Number(e.target.value))}
            />
            <button aria-label="Zoom in">
              <svg width="18" height="18" viewBox="0 0 18 18">
                <path d="M1 9H17M9 1V17" stroke="#5f5f5f" strokeWidth="3" />
              </svg>
            </button>
          </ZoomControls>
          <StatusGroup $gap={47}>
            <span>81%</span>
            <button aria-label="Fit slide to window"><FitIcon /></button>
          </StatusGroup>
        </StatusGroup>
      </StatusBar>
    </AppWindow>
  );
}
